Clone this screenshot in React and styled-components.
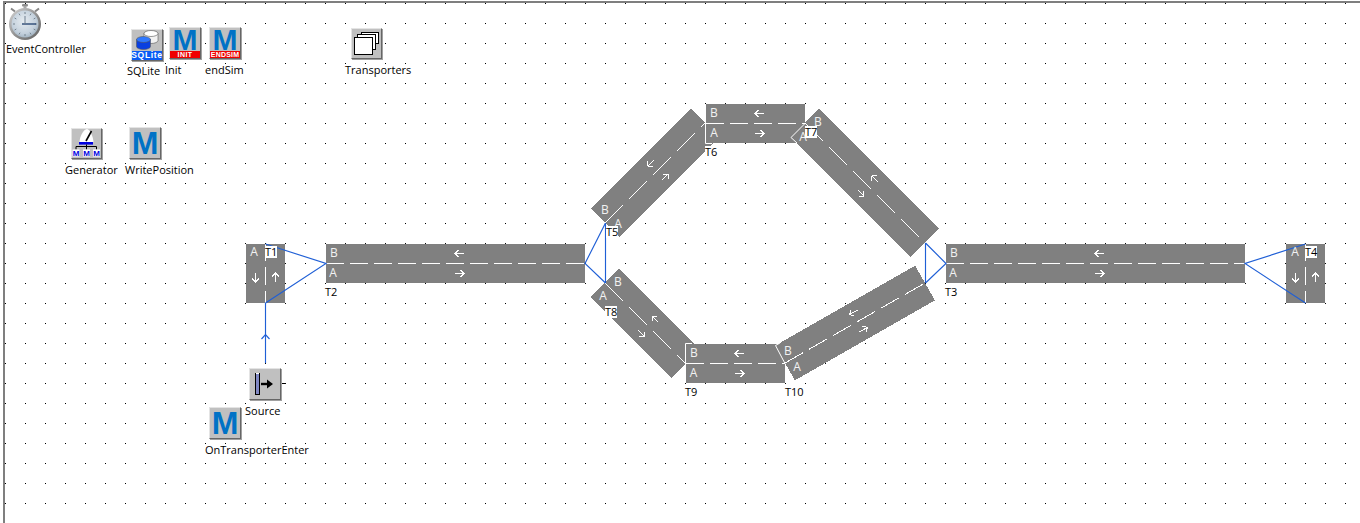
import React from 'react';
import styled, { createGlobalStyle } from 'styled-components';

const GlobalStyle = createGlobalStyle`
  html, body {
    margin: 0;
    background: #fff;
    overflow: hidden;
  }
`;

const GREY = '#808080';
const BLUE = '#1f5fd6';

// x1,y1 -> x2,y2 is the centre line of a track, B lies on its left hand side
const tracks = [
  { id: 'T5', x1: 605, y1: 223, x2: 705, y2: 123, width: 40 },
  { id: 'T7', x1: 805, y1: 123, x2: 925, y2: 243, width: 40 },
  { id: 'T8', x1: 605, y1: 283, x2: 686, y2: 364, width: 40 },
  { id: 'T10', x1: 785, y1: 363, x2: 925, y2: 283, width: 40 },
  { id: 'T1', x1: 265.5, y1: 244, x2: 265.5, y2: 303, width: 39, phase: 1 },
  { id: 'T4', x1: 1305.5, y1: 244, x2: 1305.5, y2: 303, width: 39, phase: 1 },
  { id: 'T2', x1: 326, y1: 263.5, x2: 585, y2: 263.5, width: 39 },
  { id: 'T3', x1: 946, y1: 263.5, x2: 1245, y2: 263.5, width: 39 },
  { id: 'T6', x1: 706, y1: 123.5, x2: 805, y2: 123.5, width: 39 },
  { id: 'T9', x1: 686, y1: 363.5, x2: 785, y2: 363.5, width: 39 },
];

const connectors = [
  'M265.5 244L326 263.5L265.5 303',
  'M265.5 303V363',
  'M261.5 339L265.5 334.5L269.5 339',
  'M605.5 223L585 263.5L605.5 283',
  'M605.5 223V283',
  'M925.5 243L946 263.5L925.5 283',
  'M925.5 243V283',
  'M1305.5 244L1245 263.5L1305.5 303',
];

const edges = [
  'M705.5 123V143.5H712',
  'M685.5 363V343.5H692',
  'M805 123.5L791 137.5L797 143',
  'M785 363.5L775.5 345.5L780 343',
];

const letters = [
  ['A', 254, 252], ['A', 1295, 252],
  ['B', 334, 253], ['A', 333, 273],
  ['B', 954, 253], ['A', 953, 273],
  ['B', 714, 113], ['A', 714, 133],
  ['B', 694, 353], ['A', 693.5, 373],
  ['B', 605, 210], ['A', 618, 224],
  ['B', 818, 122], ['A', 803, 137],
  ['B', 618, 282], ['A', 603, 296],
  ['B', 788, 351], ['A', 797, 367],
];

const captions = [
  ['EventController', 6, 49],
  ['SQLite', 127, 71],
  ['Init', 165, 70],
  ['endSim', 205, 70],
  ['Transporters', 345, 70],
  ['Generator', 65, 170],
  ['WritePosition', 125, 170],
  ['Source', 245, 411],
  ['OnTransporterEnter', 205, 450],
  ['T1', 265, 252],
  ['T2', 325, 292],
  ['T3', 945, 292],
  ['T4', 1305, 252],
  ['T5', 606, 232],
  ['T6', 705, 152],
  ['T7', 805, 132],
  ['T8', 605, 312],
  ['T9', 685, 392],
  ['T10', 785, 392],
];

const Track = ({ x1, y1, x2, y2, width, phase = 0 }) => {
  const dx = x2 - x1;
  const dy = y2 - y1;
  const length = Math.hypot(dx, dy);
  const angle = (Math.atan2(dy, dx) * 180) / Math.PI;
  // dashes repeat every 24px along the longer axis of the screen
  const stretch = length / Math.max(Math.abs(dx), Math.abs(dy));
  const mid = length / 2 + 4;
  return (
    <g transform={`translate(${x1} ${y1}) rotate(${angle})`}>
      <line x1="0" y1="0" x2={length} y2="0" stroke={GREY} strokeWidth={width} />
      <line
        x1="0"
        y1="0"
        x2={length}
        y2="0"
        stroke="#fff"
        strokeDasharray={`${18 * stretch} ${6 * stretch}`}
        strokeDashoffset={phase}
      />
      <g fill="none" stroke="#fff">
        <path d={`M${mid + 4.5} -10H${mid - 4.5}M${mid - 1} -13.5L${mid - 4.5} -10L${mid - 1} -6.5`} />
        <path d={`M${mid - 4.5} 10H${mid + 4.5}M${mid + 1} 6.5L${mid + 4.5} 10L${mid + 1} 13.5`} />
      </g>
    </g>
  );
};

const Stopwatch = () => (
  <Watch viewBox="0 0 36 38" width="36" height="38">
    <defs>
      <radialGradient id="face" cx="45%" cy="40%" r="65%">
        <stop offset="0" stopColor="#e6ecf1" />
        <stop offset="0.7" stopColor="#c3d0dc" />
        <stop offset="1" stopColor="#9badbb" />
      </radialGradient>
      <linearGradient id="rim" x1="0" y1="0" x2="1" y2="1">
        <stop offset="0" stopColor="#d6d6d6" />
        <stop offset="0.5" stopColor="#949494" />
        <stop offset="1" stopColor="#5f5f5f" />
      </linearGradient>
    </defs>
    <rect x="15" y="0" width="6" height="2.5" rx="1" fill="#8f8f8f" />
    <rect x="16.5" y="2" width="3" height="3" fill="#a8a8a8" />
    <path d="M4 4.5l4 3M32 4.5l-4 3" stroke="#858585" strokeWidth="2" />
    <circle cx="18" cy="20" r="16" fill="url(#rim)" />
    <circle cx="18" cy="20" r="13.5" fill="url(#face)" />
    <path
      d="M18 8v2M18 30v2M6 20h2M28 20h2M12 9.6l1 1.7M24 9.6l-1 1.7M7.6 14l1.7 1M28.4 14l-1.7 1M7.6 26l1.7-1M28.4 26l-1.7-1M12 30.4l1-1.7M24 30.4l-1-1.7"
      stroke="#75838f"
    />
    <path d="M15 20h14" stroke="#2c4a74" strokeWidth="1.4" />
    <path d="M18 12v8" stroke="#6f7f8e" />
  </Watch>
);

const Cylinder = ({ x, y, rx, ry, h, body, top }) => (
  <g stroke="#555" strokeWidth="0.6">
    <path d={`M${x - rx} ${y}v${h}a${rx} ${ry} 0 0 0 ${rx * 2} 0v${-h}z`} fill={body} />
    <ellipse cx={x} cy={y} rx={rx} ry={ry} fill={top} />
  </g>
);

const App = () => (
  <Page>
    <GlobalStyle />
    <Canvas />

    <Drawing width="1360" height="523" viewBox="0 0 1360 523">
      <g shapeRendering="crispEdges">
        {tracks.map((t) => (
          <Track key={t.id} {...t} />
        ))}
      </g>
      <g fill="none" stroke={BLUE} strokeWidth="1.15">
        {connectors.map((d) => (
          <path key={d} d={d} />
        ))}
      </g>
      <g fill="none" stroke="#fff">
        {edges.map((d) => (
          <path key={d} d={d} />
        ))}
      </g>
      {letters.map(([text, x, y]) => (
        <Letter key={`${text}${x}`} x={x} y={y + 4} textAnchor="middle">
          {text}
        </Letter>
      ))}
      <path d="M280 383.5h6" stroke="#000" />
    </Drawing>

    <Stopwatch />

    <IconBox $x={131} $y={29}>
      <svg width="30" height="21" viewBox="0 0 30 21">
        <Cylinder x={19} y={3.5} rx={7} ry={3} h={7} body="#f2f2f2" top="#fff" />
        <Cylinder x={11.5} y={9.5} rx={7} ry={3} h={7} body="#0a3fe0" top="#2f78ff" />
      </svg>
      <Band $color="#0a5cf5" $height={9} $size={8.5} $spacing={0.7}>SQLite</Band>
    </IconBox>
    <IconBox $x={169} $y={27}>
      <Logo $banded>M</Logo>
      <Band $color="#f00000" $height={7} $size={7} $spacing={0.4}>INIT</Band>
    </IconBox>
    <IconBox $x={209} $y={27}>
      <Logo $banded>M</Logo>
      <Band $color="#f00000" $height={7} $size={7} $spacing={0.2}>ENDSIM</Band>
    </IconBox>
    <IconBox $x={351} $y={28} $size={31}>
      <svg width="29" height="29" viewBox="0 0 29 29" fill="#fff" stroke="#000">
        <rect x="9.5" y="3.5" width="17" height="11" />
        <rect x="5.5" y="5.5" width="18" height="15" />
        <rect x="2.5" y="8.5" width="18" height="17" />
      </svg>
    </IconBox>
    <IconBox $x={71} $y={128} $size={31}>
      <svg width="29" height="29" viewBox="0 0 29 29">
        <path d="M7.5 13C8 7 11 1 15 0c3 1 6 7 6.5 13z" fill="#fff" />
        <path d="M14 12L19.5 2" stroke="#000" strokeWidth="1.6" />
        <rect x="7" y="13" width="14" height="2.6" fill="#0000e0" />
        <path d="M14.5 15.5v2M4 20.5v-3h20.5v3M14.5 17.5v3" fill="none" stroke="#000" />
        <rect x="0.5" y="20.5" width="7" height="7" fill="#fff" />
        <rect x="11" y="20.5" width="7" height="7" fill="#fff" />
        <rect x="21" y="20.5" width="7" height="7" fill="#fff" />
        <MiniM x="4" y="27" textAnchor="middle">M</MiniM>
        <MiniM x="14.5" y="27" textAnchor="middle">M</MiniM>
        <MiniM x="24.5" y="27" textAnchor="middle">M</MiniM>
      </svg>
    </IconBox>
    <IconBox $x={129} $y={127}>
      <Logo>M</Logo>
    </IconBox>
    <IconBox $x={249} $y={368}>
      <svg width="30" height="30" viewBox="0 0 30 30">
        <rect x="5.5" y="4.5" width="4" height="21" fill="#8088c4" stroke="#000" />
        <path d="M6 4.5h3" stroke="#fff" />
        <path d="M11 15h7" stroke="#000" strokeWidth="2.4" />
        <path d="M17 10.5L23 15L17 19.5z" fill="#000" />
      </svg>
    </IconBox>
    <IconBox $x={209} $y={407}>
      <Logo>M</Logo>
    </IconBox>

    {captions.map(([text, x, y]) => (
      <Caption key={text} $x={x} $y={y}>
        {text}
      </Caption>
    ))}
  </Page>
);

export default App;

const Page = styled.div`
  position: relative;
  box-sizing: border-box;
  width: 1360px;
  height: 523px;
  padding: 1px 0 0 3px;
  display: flex;
  overflow: hidden;
  background: #fff;
`;

const Canvas = styled.div`
  flex: 1;
  border-top: 2px solid #7f7f7f;
  border-left: 2px solid #7f7f7f;
  background-color: #000;
  background-image: linear-gradient(to right, transparent 1px, #fff 1px),
    linear-gradient(to bottom, transparent 1px, #fff 1px);
  background-size: 20px 20px;
`;

const Drawing = styled.svg`
  position: absolute;
  left: 0;
  top: 0;
`;

const Letter = styled.text`
  font-family: 'Open Sans', 'Liberation Sans', sans-serif;
  font-size: 12px;
  fill: #f2f2f2;
`;

const MiniM = styled.text`
  font-family: 'Liberation Sans', sans-serif;
  font-size: 8px;
  font-weight: 700;
  fill: #0000e0;
`;

const Watch = styled.svg`
  position: absolute;
  left: 7px;
  top: 4px;
`;

const IconBox = styled.div`
  position: absolute;
  left: ${(p) => p.$x}px;
  top: ${(p) => p.$y}px;
  box-sizing: border-box;
  width: ${(p) => p.$size || 32}px;
  height: ${(p) => p.$size || 32}px;
  display: flex;
  flex-direction: column;
  align-items: center;
  justify-content: center;
  background: #c0c0c0;
  border: 1px solid;
  border-color: #e4e4e4 #666 #666 #e4e4e4;
  box-shadow: 1px 1px 0 #a0a0a0;
`;

const Logo = styled.span`
  flex: 1;
  min-height: 0;
  display: flex;
  align-items: center;
  justify-content: center;
  font-family: 'Liberation Sans', sans-serif;
  font-weight: 700;
  font-size: ${(p) => (p.$banded ? 30 : 32)}px;
  line-height: ${(p) => (p.$banded ? 23 : 30)}px;
  color: #0072c6;
`;

const Band = styled.span`
  align-self: stretch;
  height: ${(p) => p.$height}px;
  flex: none;
  display: flex;
  align-items: center;
  justify-content: center;
  background: ${(p) => p.$color};
  color: #fff;
  font-family: 'Liberation Sans', sans-serif;
  font-weight: 700;
  font-size: ${(p) => p.$size}px;
  letter-spacing: ${(p) => p.$spacing}px;
  line-height: ${(p) => p.$height}px;
`;

const Caption = styled.span`
  position: absolute;
  left: ${(p) => p.$x}px;
  top: ${(p) => p.$y - 6}px;
  font-family: 'Open Sans', 'Liberation Sans', sans-serif;
  font-size: 11px;
  line-height: 12px;
  color: #000;
  background: #fff;
  white-space: nowrap;
`;
